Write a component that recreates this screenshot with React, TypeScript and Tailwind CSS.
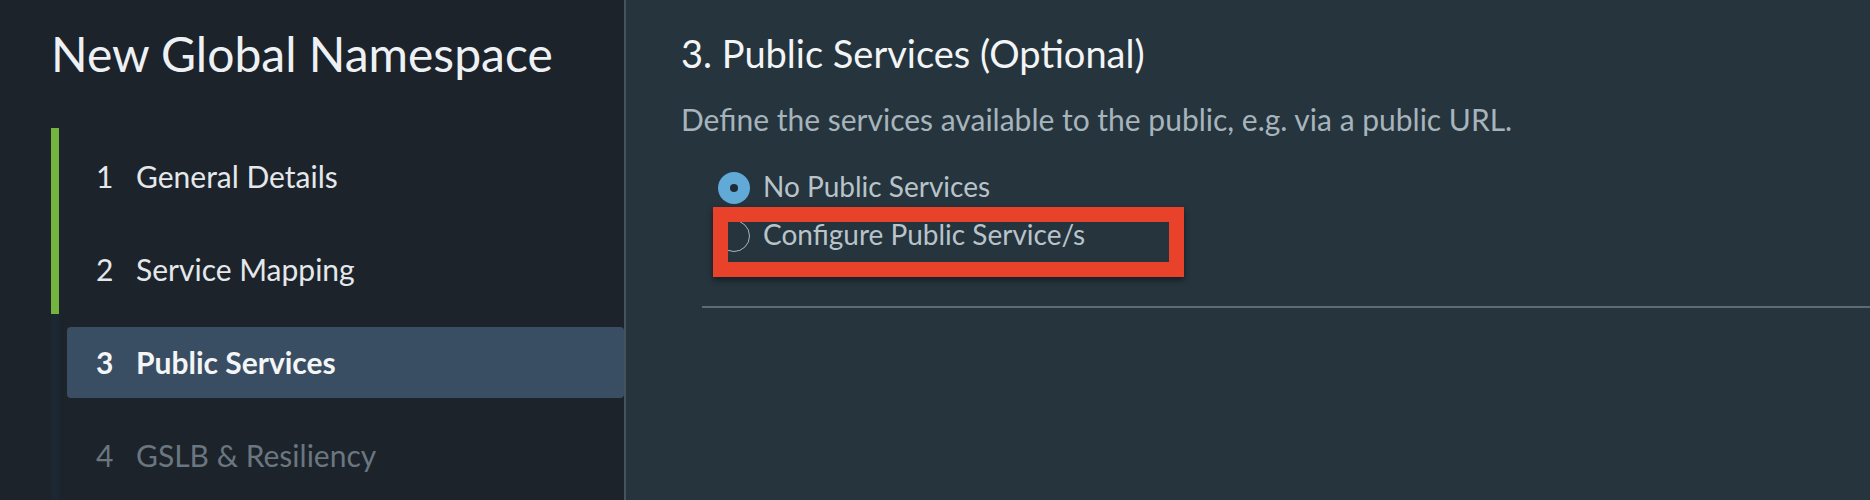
const steps = [
  { n: 1, label: "General Details", state: "done" },
  { n: 2, label: "Service Mapping", state: "done" },
  { n: 3, label: "Public Services", state: "active" },
  { n: 4, label: "GSLB & Resiliency", state: "todo" },
]

function StepItem({ n, label, state }: { n: number; label: string; state: string }) {
  const bar = state === "done" ? "bg-[#73b53e]" : "bg-[#1b2831]"
  const box = state === "active" ? "bg-[#394e62] font-bold text-[#f3f5f7]" : state === "done" ? "text-[#e4e8eb]" : "text-[#6a7680]"
  return (
    <li className="flex h-[93px]">
      <div className={`w-[8px] shrink-0 ${bar}`} />
      <div className="flex-1 pl-2 pt-[13px]">
        <div className={`flex h-[71px] items-center rounded-[4px] pl-[29px] text-[30px] ${box}`}>
          <span className="w-[40px]">{n}</span>
          <span>{label}</span>
        </div>
      </div>
    </li>
  )
}

export default function App() {
  return (
    <div className="flex h-[500px] w-[1870px] overflow-hidden font-['Lato',sans-serif]">
      <aside className="w-[626px] shrink-0 border-r-2 border-[#46525c] bg-[#1c232b] pl-[51px]">
        <h1 className="pt-[30px] text-[48px] leading-[48px] text-[#eef1f4]">New Global Namespace</h1>
        <ol className="mt-[50px]">
          {steps.map((s) => (
            <StepItem key={s.n} {...s} />
          ))}
        </ol>
      </aside>

      <main className="flex-1 bg-[#25343d] pl-[55px]">
        <h2 className="pt-[31px] text-[38px] leading-[44px] text-[#f2f4f6]">3. Public Services (Optional)</h2>
        <p className="mt-[26px] text-[30px] leading-[36px] text-[#a7b4bc]">
          Define the services available to the public, e.g. via a public URL.
        </p>

        <div className="mt-[27px] pl-[37px] text-[28px] text-[#b8c3ca]">
          <label className="flex h-[48px] items-center">
            <span className="flex h-[32px] w-[32px] items-center justify-center rounded-full bg-[#61a9d7]">
              <span className="h-[8px] w-[8px] rounded-full bg-[#1e2b33]" />
            </span>
            <span className="ml-[13px] pb-[5px]">No Public Services</span>
          </label>
          <label className="relative flex h-[48px] items-center">
            <span className="h-[32px] w-[32px] rounded-full border-[1.5px] border-[#aab5bc]" />
            <span className="ml-[13px] pb-[5px]">Configure Public Service/s</span>
            <div className="absolute left-[-5px] top-[-5px] h-[70px] w-[471px] border-[15px] border-[#e8432a] shadow-[0_3px_6px_rgba(0,0,0,0.45)]" />
          </label>
        </div>

        <hr className="ml-[21px] mt-[46px] border-t-2 border-[#5d6b75]" />
      </main>
    </div>
  )
}
